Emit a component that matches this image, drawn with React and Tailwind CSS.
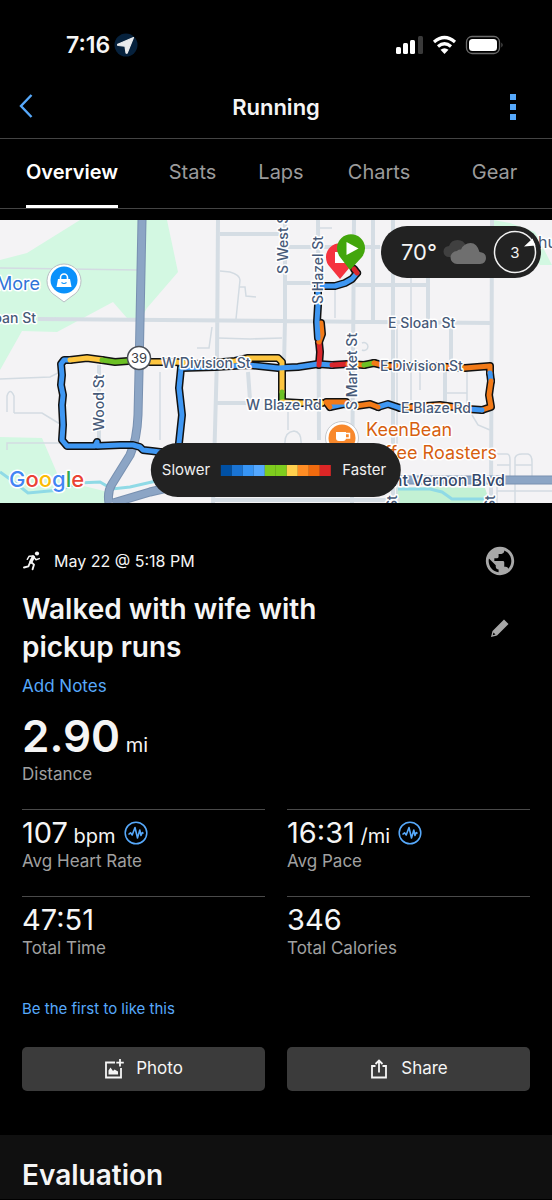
import { useState } from 'react';
import { MdPublic } from 'react-icons/md';

const TABS = ['Overview', 'Stats', 'Laps', 'Charts', 'Gear'];

const STATS = [
  { label: 'Avg Heart Rate', value: '107', unit: 'bpm', pulse: true },
  { label: 'Avg Pace', value: '16:31', unit: '/mi', pulse: true },
  { label: 'Total Time', value: '47:51' },
  { label: 'Total Calories', value: '346' }
];

// Route pieces, coloured by pace
const BLUE = '#3f97f2';
const YELLOW = '#fdc53f';
const ORANGE = '#f27a18';
const RED = '#d9262b';
const GREEN = '#6cc024';

const ROUTE = [
  { color: BLUE, d: 'M181 368L179 388L182 415L179 443V452H160L152 451L143 450L140 447L133 445H120L97 446V442L95 446H67L62 440L63 425L62 405L63 395L61 385L62 375L61 364L64 360H70' },
  { color: YELLOW, d: 'M70 360L87 358L102 360' },
  { color: GREEN, d: 'M102 360L115 362L128 361' },
  { color: YELLOW, d: 'M150 362H175L200 364L235 361L248 358L278 358L282 362V392' },
  { color: GREEN, d: 'M282 392V402' },
  { color: YELLOW, d: 'M282 402L300 403L322 403' },
  { color: BLUE, d: 'M181 368L215 367L248 365L278 368L298 367L318 364L332 365' },
  { color: RED, d: 'M332 365L348 364' },
  { color: ORANGE, d: 'M348 364L364 365' },
  { color: GREEN, d: 'M364 365L374 363' },
  { color: ORANGE, d: 'M374 363L386 366L430 366L465 368L490 366V373' },
  { color: BLUE, d: 'M490 373L491 381' },
  { color: ORANGE, d: 'M491 381L489 395L491 407L482 410' },
  { color: BLUE, d: 'M482 410L468 409' },
  { color: ORANGE, d: 'M468 409L440 405L400 408' },
  { color: BLUE, d: 'M400 408L388 404L378 407' },
  { color: ORANGE, d: 'M378 407L370 404L356 406' },
  { color: BLUE, d: 'M356 406L344 404L330 407' },
  { color: ORANGE, d: 'M330 407L326 402L346 402' },
  { color: RED, d: 'M319 365L320 352L319 342' },
  { color: ORANGE, d: 'M319 342L322 334L321 323' },
  { color: BLUE, d: 'M318 338L317 322L318 305V287L323 286H335L345 283L352 279L357 273' },
  { color: RED, d: 'M357 273L354 269' }
];

const STREETS =
  'M38 319L284 321L375 322L492 323M218 220L217 357L213 503M285 220V321L284 365M318 220L319 440M354 220L352 503' +
  'M373 220V322M220 234H282M288 247H380M285 283H318M355 285H428M393 220V503M428 270V320M492 220L491 503M217 403H247' +
  'M248 372L250 400M451 322V365M445 370V405M99 365V440M213 500H400';

const LANES =
  'M0 268L138 270M0 379L50 377L60 372M14 413H42L60 424M7 412V396Q10 387 14 396V413M7 450V443H60' +
  'M220 271L230 272Q240 275 240 280L236 319M240 287H245L246 296L256 297M335 287V318M218 338L250 339L282 338' +
  'M212 327L209 348H197M397 325V503M411 270V400M420 370V390M467 370V410M445 393H467M472 415L478 425L490 430' +
  'M288 412V430M285 445Q284 432 294 431Q302 432 301 445M497 454H507Q510 454 510 460V480M497 465H510M515 480V458' +
  'Q516 454 522 454H528Q532 455 532 462V480M515 465H532M497 491H552M160 372V440M320 228H332M362 343A4 4 0 1 1 362 350' +
  'M497 484V503M515 484V503';

const HIGHWAY =
  'M142 220L139 372L138 415Q137 440 130 455L112 484Q107 492 109 503M113 503L150 492L180 485M396 480H552';

const LEGEND = [
  'bg-[#0050a4]',
  'bg-[#1a74d4]',
  'bg-[#3795f5]',
  'bg-[#54a8ff]',
  'bg-[#7ecc1e]',
  'bg-[#7ecc1e]',
  'bg-[#ffcf4d]',
  'bg-[#ff8d24]',
  'bg-[#f06a0e]',
  'bg-[#dc2626]'
];

function StatusBar() {
  return (
    <div className="flex h-[76px] items-center justify-between pt-3.5 pr-12 pl-[66px]">
      <div className="flex items-center gap-1">
        <span className="text-[23px] leading-7 font-semibold">7:16</span>
        <svg viewBox="0 0 24 24" className="h-6 w-6" aria-hidden="true">
          <circle cx="12" cy="12" r="11.500" fill="#06213c" />
          <path d="M19.500 4.500L3.800 11.200q-.6.9.4 1.300L11 13.200l1 6.600q.7.900 1.300.1z" fill="#e9eaec" stroke="#e9eaec" strokeWidth="1.200" strokeLinejoin="round" />
        </svg>
      </div>
      <svg viewBox="0 0 108 20" className="h-5 w-[108px]" aria-hidden="true">
        <g fill="#fff">
          <rect x="0" y="12" width="5" height="7" rx="1.500" />
          <rect x="7" y="8" width="5" height="11" rx="1.500" />
          <rect x="14" y="5" width="5" height="14" rx="1.500" />
          <rect x="22" y="1" width="5" height="18" rx="1.500" fill="#3a3a3a" />
        </g>
        <g fill="none" stroke="#fff" strokeWidth="3.200">
          <path d="M38 7Q48.500 -2 59 7" />
          <path d="M42 11.500Q48.500 6 55 11.500" />
        </g>
        <path d="M44.500 14.800Q48.500 11.600 52.500 14.800L48.500 19z" fill="#fff" />
        <rect x="70.500" y="1.500" width="33" height="17" rx="5.500" fill="none" stroke="#6b6b6b" strokeWidth="1.300" />
        <rect x="73" y="4" width="28" height="12" rx="3.500" fill="#fff" />
        <path d="M105.500 7.500q2 2.500 0 5z" fill="#6b6b6b" />
      </svg>
    </div>
  );
}

function Header() {
  return (
    <header className="grid h-[63px] grid-cols-[1fr_auto_1fr] items-center border-b border-[#444] px-4">
      <button type="button" aria-label="Back" className="justify-self-start">
        <svg viewBox="0 0 20 28" className="h-7 w-5" fill="none" stroke="#57a9fb" strokeWidth="2.400">
          <path d="M15.500 2L5 13l10.500 11" />
        </svg>
      </button>
      <h1 className="text-[22px] leading-7 font-semibold">Running</h1>
      <button type="button" aria-label="More options" className="justify-self-end px-5">
        <svg viewBox="0 0 6 26" className="h-[26px] w-1.5" fill="#57a9fb">
          <path d="M0 0h6v6H0zM0 10h6v6H0zM0 20h6v6H0z" />
        </svg>
      </button>
    </header>
  );
}

function RouteMap() {
  return (
    <svg viewBox="0 220 552 283" className="block h-auto w-full" role="img" aria-label="Route map">
      <rect y="220" width="552" height="283" fill="#f4f3f5" />

      {/* Parks */}
      <g fill="#d3f8e2">
        <path d="M0 260L27 253L80 220H167L178 272L147 308L140 320L127 318L113 302L57 332L22 331L0 370z" />
        <path d="M0 437L42 438L60 480L108 492V503H0z" />
        <path d="M493 220L510 223L535 232L552 265H540L520 240L493 226z" />
      </g>
      <path d="M396 488L430 487L485 488L490 503H396z" fill="#c3f1d4" />
      <path d="M0 472L14 482L28 493L60 490L78 483L100 482L112 489L130 487L165 479M398 489H430L442 492L452 499H485" fill="none" stroke="#8fdae6" strokeWidth="3" />

      {/* Roads */}
      <path d={LANES} fill="none" stroke="#d3dbe2" strokeWidth="1.500" />
      <path d={STREETS} fill="none" stroke="#d5dde4" strokeWidth="4" />
      <g fill="none" strokeLinejoin="round">
        <path d={HIGHWAY} stroke="#7890b0" strokeWidth="9" />
        <path d={HIGHWAY} stroke="#8ca5c5" strokeWidth="7" />
      </g>

      {/* Activity route */}
      <g fill="none" strokeLinejoin="round" strokeLinecap="round">
        {ROUTE.map((part) => (
          <path key={part.d} d={part.d} stroke="#111" strokeWidth="8" />
        ))}
      </g>
      <g fill="none" strokeLinejoin="round" strokeLinecap="round">
        {ROUTE.map((part) => (
          <path key={part.d} d={part.d} stroke={part.color} strokeWidth="5" />
        ))}
      </g>

      {/* Street names */}
      <g fill="#475a78" stroke="#fff" strokeWidth="3" strokeLinejoin="round" paintOrder="stroke" className="text-[14px] font-medium">
        <text x="36" y="323" textAnchor="end">Sloan St</text>
        <text x="388" y="328">E Sloan St</text>
        <text x="162" y="368">W Division St</text>
        <text x="380" y="371">E Division St</text>
        <text x="246" y="410">W Blaze Rd</text>
        <text x="401" y="413">E Blaze Rd</text>
        <text transform="translate(288 274) rotate(-90)">S West St</text>
        <text transform="translate(323 304) rotate(-90)">S Hazel St</text>
        <text transform="translate(357 410) rotate(-90)">S Market St</text>
        <text transform="translate(104 431) rotate(-90)">Wood St</text>
        <text transform="translate(397 509) rotate(-90)">St</text>
        <text transform="translate(495 509) rotate(-90)">St</text>
        <text x="505" y="486" textAnchor="end" fill="#34486a" className="text-[16px]">Mount Vernon Blvd</text>
        <text x="538" y="248" className="text-[16px] font-normal">hurch</text>
      </g>

      {/* Route shield */}
      <circle cx="139" cy="358" r="11.500" fill="#fff" stroke="#4a4f57" strokeWidth="1.500" />
      <text x="139" y="363" textAnchor="middle" fill="#3c4148" className="text-[13px]">39</text>

      {/* Places */}
      <g stroke="#fff" strokeWidth="3" strokeLinejoin="round" paintOrder="stroke" className="text-[18px]">
        <text x="40" y="290" textAnchor="end" fill="#2f74d8">More</text>
        <text x="366" y="436" fill="#d75f10">KeenBean</text>
        <text x="497" y="459" textAnchor="end" fill="#d75f10">Coffee Roasters</text>
      </g>
      <path d="M64 302L56 296A17 17 0 1 1 72 296z" fill="#fff" stroke="#b9bec4" strokeWidth="1" />
      <circle cx="64" cy="280" r="13.500" fill="#0a91fb" />
      <path d="M58 279h12l1.500 8h-15z" fill="#fff" />
      <path d="M60.500 280v-2.500a3.500 3.500 0 0 1 7 0V280" fill="none" stroke="#fff" strokeWidth="1.600" />
      <path d="M61.500 282.500q2.500 2 5 0" fill="none" stroke="#0a91fb" strokeWidth="1.200" />
      <circle cx="342" cy="438" r="16.500" fill="#fff" stroke="#c4c8cd" strokeWidth="1" />
      <circle cx="342" cy="438" r="13.500" fill="#f8882c" />
      <path d="M336 432h10v6q0 3-3 3h-4q-3 0-3-3z" fill="#fff" />
      <path d="M346 433.500h3.500v4.500H346" fill="none" stroke="#fff" strokeWidth="1.500" />

      {/* Finish and start pins */}
      <path d="M340 279L330 267A14 14 0 1 1 350 267z" fill="#f5333f" />
      <rect x="335" y="252" width="11" height="11" fill="#fff" />
      <path d="M350 270L340 257A14 14 0 1 1 362 257z" fill="#43a60c" />
      <path d="M346.500 242v13l12-6.500z" fill="#fff" />

      <text x="9" y="487" stroke="#fff" strokeWidth="3" strokeLinejoin="round" paintOrder="stroke" className="text-[22px] font-medium">
        <tspan fill="#4285f4">G</tspan>
        <tspan fill="#ea4335">o</tspan>
        <tspan fill="#fbbc05">o</tspan>
        <tspan fill="#4285f4">g</tspan>
        <tspan fill="#34a853">l</tspan>
        <tspan fill="#ea4335">e</tspan>
      </text>
    </svg>
  );
}

function WeatherPill() {
  return (
    <div className="absolute top-1.5 right-[11px] flex h-[52px] items-center gap-1.5 rounded-full bg-[#222] pr-1 pl-5">
      <span className="text-[22px] leading-7">70°</span>
      <svg viewBox="0 0 44 24" className="h-6 w-11" aria-hidden="true">
        <path d="M6 17a5.500 5.500 0 0 1 0-11Q8 0 14.500 0T23 6v11z" fill="#404040" />
        <path d="M14 24a6.500 6.500 0 0 1 0-13Q15 9 18 9.500Q21 3 27.500 3T36.500 12Q43 12.500 43 18T37 24z" fill="#6f6f6f" />
      </svg>
      <svg viewBox="0 0 44 44" className="h-11 w-11" role="img" aria-label="Wind 3">
        <circle cx="22" cy="22" r="20.500" fill="none" stroke="#f2f2f2" strokeWidth="1.500" />
        <path d="M31 16.500L39.500 8.500L42.500 15.500z" fill="#fff" />
        <text x="22" y="27.500" textAnchor="middle" fill="#f2f2f2" className="text-[15px]">3</text>
      </svg>
    </div>
  );
}

function PaceLegend() {
  return (
    <div className="absolute bottom-1.5 left-1/2 flex h-[54px] -translate-x-1/2 items-center gap-[11px] rounded-full bg-[#222] pr-[15px] pl-[11px] text-[15px] text-[#f0f0f0]">
      <span>Slower</span>
      <div className="flex">
        {LEGEND.map((color, i) => (
          <span key={i} className={`h-[11px] w-[11px] ${color}`} />
        ))}
      </div>
      <span>Faster</span>
    </div>
  );
}

function RunnerIcon() {
  return (
    <svg viewBox="0 0 20 20" className="h-5 w-5" fill="none" stroke="#f5f5f5" strokeLinecap="round" strokeLinejoin="round" aria-hidden="true">
      <circle cx="15" cy="2.500" r="2.100" fill="#f5f5f5" stroke="none" />
      <path d="M11.300 6L8.800 11" strokeWidth="3.400" />
      <path d="M11 5L7.200 5.200L5.300 8.300M12 6.200L14 8.800L17.300 7.600" strokeWidth="1.500" />
      <path d="M9.300 11.200L12 13.600L10.600 18.300M8 11.500L6.400 15.300L2 16.500" strokeWidth="1.900" />
    </svg>
  );
}

function PulseIcon() {
  return (
    <svg viewBox="0 0 24 24" className="h-6 w-6" fill="none" stroke="#57a9fb" aria-hidden="true">
      <circle cx="12" cy="12" r="10.800" strokeWidth="1.500" />
      <path d="M4.500 13.500L6.500 11.800L8.200 14L11 6.500L13.500 17L15.800 9L17 14.500L18.300 11.500L19.500 12.500" strokeWidth="1.600" strokeLinejoin="round" />
    </svg>
  );
}

function Stat({ label, value, unit, pulse }) {
  return (
    <div className="h-[87px] border-t border-[#4a4a4a] pt-[7px]">
      <dd className="flex items-center gap-2">
        <span className="text-[29px] leading-8">
          {value}
          {unit && <span className="text-[20px] leading-none"> {unit}</span>}
        </span>
        {pulse && <PulseIcon />}
      </dd>
      <dt className="text-[17px] leading-6 text-[#a0a0a0]">{label}</dt>
    </div>
  );
}

export default function App() {
  const [activeTab, setActiveTab] = useState('Overview');

  return (
    <div className="min-h-screen bg-black font-['Inter',sans-serif] text-[#f5f5f5]">
      <StatusBar />
      <Header />

      <nav className="grid h-[70px] grid-cols-[144fr_97fr_80fr_116fr_115fr] border-b border-[#444] text-[20px]">
        {TABS.map((tab) => (
          <button
            key={tab}
            type="button"
            onClick={() => setActiveTab(tab)}
            className={
              tab === activeTab
                ? 'justify-self-center border-b-3 border-white font-semibold text-white'
                : 'justify-self-center border-b-3 border-transparent text-[#9b9b9b]'
            }
          >
            {tab}
          </button>
        ))}
      </nav>

      <main>
        <div className="relative mt-[11px]">
          <RouteMap />
          <WeatherPill />
          <PaceLegend />
        </div>

        <section className="px-[22px] pt-[41px]">
          <div className="flex items-center justify-between">
            <p className="flex items-center gap-3 text-[16px] leading-6">
              <RunnerIcon />
              May 22 @ 5:18 PM
            </p>
            <button type="button" aria-label="Privacy" className="px-[13px]">
              <MdPublic className="h-[34px] w-[34px] text-[#a8a8a8]" />
            </button>
          </div>

          <div className="mt-3 flex items-center justify-between">
            <h2 className="max-w-[330px] text-[28px] leading-[38px] font-semibold">Walked with wife with pickup runs</h2>
            <button type="button" aria-label="Edit title" className="px-5">
              <svg viewBox="0 0 20 20" className="h-5 w-5" fill="#a8a8a8">
                <path d="M1 19l1.500-6L14 1.500l4.500 4.500L7 17.500zM3.500 14.500l-.8 2.800 2.800-.8z" fillRule="evenodd" />
              </svg>
            </button>
          </div>

          <button type="button" className="mt-2 block text-[17px] leading-6 text-[#57a9fb]">
            Add Notes
          </button>

          <dl className="mt-3">
            <dd className="text-[44px] leading-[52px] font-semibold">
              2.90<span className="text-[20px] leading-none font-normal"> mi</span>
            </dd>
            <dt className="text-[17px] leading-6 text-[#a0a0a0]">Distance</dt>
          </dl>

          <dl className="mt-[23px] grid grid-cols-2 gap-x-[22px]">
            {STATS.map((stat) => (
              <Stat key={stat.label} {...stat} />
            ))}
          </dl>

          <a href="#likes" className="mt-4 block text-[15px] leading-5 text-[#57a9fb]">
            Be the first to like this
          </a>

          <div className="mt-7 grid grid-cols-2 gap-x-[22px]">
            <button type="button" className="flex h-11 items-center justify-center gap-3 rounded-[5px] bg-[#3b3b3b] text-[17px]">
              <svg viewBox="0 0 20 20" className="h-5 w-5" fill="none" stroke="#f5f5f5" strokeWidth="1.800">
                <path d="M11 3.500H2v15h15V9M16 0v7.500M12.300 3.700h7.500" />
                <path d="M4.500 15.500v-4l2-3 2.500 3.500 1.500-1.500 3.500 2v3z" fill="#f5f5f5" stroke="none" />
              </svg>
              Photo
            </button>
            <button type="button" className="flex h-11 items-center justify-center gap-3 rounded-[5px] bg-[#3b3b3b] text-[17px]">
              <svg viewBox="0 0 20 20" className="h-5 w-5" fill="none" stroke="#f5f5f5" strokeWidth="1.800">
                <path d="M6.500 7H3v11.500h14V7h-3.500M10 13.500V2M6.500 5L10 1.500 13.500 5" />
              </svg>
              Share
            </button>
          </div>
        </section>

        <section className="mt-11 bg-[#101010] px-[22px] pt-5 pb-1">
          <h2 className="text-[28px] leading-10 font-semibold">Evaluation</h2>
        </section>
      </main>
    </div>
  );
}
